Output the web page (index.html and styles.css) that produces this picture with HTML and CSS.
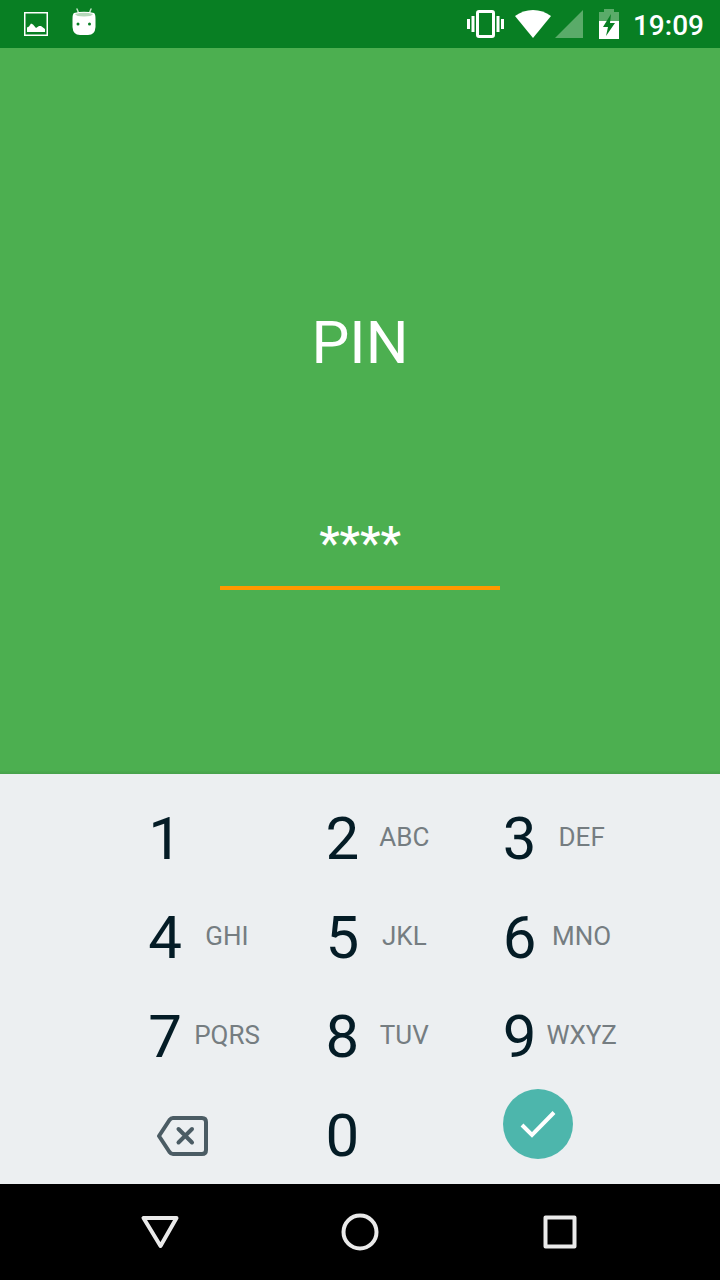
FILE: index.html
```html
<!DOCTYPE html>
<html lang="en">
<head>
<meta charset="utf-8">
<meta name="viewport" content="width=device-width, initial-scale=1">
<title>PIN</title>
<link rel="stylesheet" href="styles.css">
</head>
<body>
<div class="screen">
  <header class="status">
    <div class="status-group status-notes">
      <svg width="24" height="28" viewBox="0 0 24 28" fill="#fff" aria-hidden="true">
        <path fill-rule="evenodd" d="M0 4h24v24H0zM1.500 5.500v21h21v-21z"/>
        <path d="M3 24v-4.500l2-1 2-3 2 1 3 3.500 3-2h2l4 3V24z"/>
      </svg>
      <svg width="24" height="28" viewBox="0 0 24 28" aria-hidden="true">
        <path d="M7 6 5 1M17 6l2-5" stroke="#c5e3c9" stroke-width="1.500" stroke-linecap="round"/>
        <path d="M2 5Q12 2.500 22 5Q23.500 6 23.500 11V19Q23 27 16 27H8Q1 27 .5 19V11Q.5 6 2 5z" fill="#fff"/>
        <path d="M3 6Q12 3.500 21 6Q20 8.500 12 8.500T3 6z" fill="#b5d8ba"/>
        <circle cx="6" cy="16" r="1.500" fill="#087f23"/>
        <circle cx="17.500" cy="16" r="1.500" fill="#087f23"/>
      </svg>
    </div>
    <div class="status-group">
      <svg class="vibrate" width="37" height="28" viewBox="0 0 37 28" aria-hidden="true">
        <rect x="10.500" y="1.500" width="16" height="25" rx="1.500" fill="none" stroke="#fff" stroke-width="3"/>
        <path d="M1.500 9v10M6 6v16M31 6v16M35.500 9v10" stroke="#fff" stroke-width="3"/>
      </svg>
      <svg class="wifi" width="36" height="28" viewBox="0 0 36 28" fill="#fff" aria-hidden="true">
        <path d="M0 6Q8 0 18 0t18 6L18 28z"/>
      </svg>
      <svg class="signal" width="28" height="28" viewBox="0 0 28 28" fill="#5aab69" aria-hidden="true">
        <path d="M28 0v28H0z"/>
      </svg>
      <svg class="battery" width="20" height="30" viewBox="0 0 20 30" aria-hidden="true">
        <path d="M0 3h5V0h10v3h5v9H0z" fill="#5aab69"/>
        <path d="M0 12h20v18H0z" fill="#fff"/>
        <path d="M12 5 4 18h5L7 27l9-13h-5z" fill="#087f23"/>
      </svg>
      <time class="clock">19:09</time>
    </div>
  </header>

  <main class="entry">
    <label class="title" for="pin">PIN</label>
    <input class="pin" id="pin" type="text" value="****" readonly>
  </main>

  <section class="keypad" aria-label="Keypad">
    <button class="key" type="button"><span class="digit">1</span></button>
    <button class="key" type="button"><span class="digit">2</span><span class="letters">ABC</span></button>
    <button class="key" type="button"><span class="digit">3</span><span class="letters">DEF</span></button>
    <button class="key" type="button"><span class="digit">4</span><span class="letters">GHI</span></button>
    <button class="key" type="button"><span class="digit">5</span><span class="letters">JKL</span></button>
    <button class="key" type="button"><span class="digit">6</span><span class="letters">MNO</span></button>
    <button class="key" type="button"><span class="digit">7</span><span class="letters">PQRS</span></button>
    <button class="key" type="button"><span class="digit">8</span><span class="letters">TUV</span></button>
    <button class="key" type="button"><span class="digit">9</span><span class="letters">WXYZ</span></button>
    <button class="erase" type="button" aria-label="Delete">
      <svg width="51" height="40" viewBox="0 0 51 40" fill="none" stroke="#4b5c64" stroke-width="4" stroke-linejoin="round" stroke-linecap="round" aria-hidden="true">
        <path d="M16 2H45Q49 2 49 6V34Q49 38 45 38H16Q14 38 12.500 36L2 20 12.500 4Q14 2 16 2z"/>
        <path d="M21.500 13 35 26.500M35 13 21.500 26.500"/>
      </svg>
    </button>
    <button class="key" type="button"><span class="digit">0</span></button>
    <button class="confirm" type="button" aria-label="Confirm">
      <svg width="36" height="28" viewBox="0 0 36 28" fill="none" stroke="#fff" stroke-width="4" aria-hidden="true">
        <path d="M2 15 12 25 34 2.500"/>
      </svg>
    </button>
  </section>

  <nav class="navbar" aria-label="System">
    <button class="nav-button" type="button" aria-label="Back">
      <svg width="40" height="40" viewBox="0 0 40 40" fill="none" stroke="#eaeaea" stroke-width="4" stroke-linejoin="round" aria-hidden="true"><path d="M3.500 6h33L20.500 34z"/></svg>
    </button>
    <button class="nav-button" type="button" aria-label="Home">
      <svg width="40" height="40" viewBox="0 0 40 40" fill="none" stroke="#eaeaea" stroke-width="4" aria-hidden="true"><circle cx="20" cy="20" r="16.500"/></svg>
    </button>
    <button class="nav-button" type="button" aria-label="Recent apps">
      <svg width="40" height="40" viewBox="0 0 40 40" fill="none" stroke="#eaeaea" stroke-width="4" stroke-linejoin="round" aria-hidden="true"><path d="M5.500 5.500h29v29h-29z"/></svg>
    </button>
  </nav>
</div>
</body>
</html>
```
FILE: styles.css
```css
* {
  box-sizing: border-box;
}

body {
  margin: 0;
  font-family: Roboto, "Liberation Sans", sans-serif;
}

button {
  border: 0;
  padding: 0;
  background: none;
  font: inherit;
  cursor: pointer;
}

svg {
  display: block;
}

.screen {
  display: flex;
  flex-direction: column;
  min-height: 100vh;
}

.status {
  display: flex;
  justify-content: space-between;
  align-items: center;
  height: 48px;
  padding: 0 16px 0 24px;
  background: #087f23;
}

.status-group {
  display: flex;
  align-items: center;
}

.status-notes {
  gap: 24px;
  padding-bottom: 4px;
}

.wifi {
  margin-left: 11px;
}

.signal {
  margin-left: 4px;
}

.battery {
  margin-left: 16px;
}

.clock {
  margin-left: 14px;
  padding-top: 3px;
  color: #fff;
  font-size: 28px;
  font-weight: 500;
  line-height: 32px;
}

.entry {
  flex: 1;
  display: flex;
  flex-direction: column;
  align-items: center;
  justify-content: center;
  gap: 140px;
  padding-top: 76px;
  background: linear-gradient(to top, #47a04b, #4caf50 4px);
  color: #fff;
}

.title {
  font-size: 60px;
  line-height: 70px;
}

.pin {
  width: 280px;
  height: 72px;
  padding: 0 0 18px;
  border: 0;
  border-bottom: 4px solid #ff9800;
  border-radius: 0;
  outline: 0;
  background: transparent;
  color: inherit;
  font: 500 46px/50px Roboto, "Liberation Sans", sans-serif;
  text-align: center;
}

.keypad {
  display: grid;
  grid-template-columns: repeat(3, 1fr);
  grid-auto-rows: 97px;
  row-gap: 2px;
  padding: 16px 40px 0 148px;
  background: #eceff1;
}

.key {
  display: grid;
  grid-template-columns: 34px 90px;
  align-items: center;
}

.digit {
  color: #041c26;
  font-size: 60px;
  line-height: 70px;
}

.letters {
  padding-bottom: 4px;
  color: #757d81;
  font-size: 26px;
  line-height: 30px;
}

.erase {
  justify-self: start;
  margin-left: 9px;
}

.confirm {
  display: grid;
  place-items: center;
  width: 70px;
  height: 70px;
  margin-top: 2px;
  border-radius: 50%;
  background: #4db6ac;
}

.navbar {
  display: flex;
  justify-content: center;
  height: 96px;
  background: #000;
}

.nav-button {
  display: grid;
  place-items: center;
  flex: 0 1 200px;
}
```
